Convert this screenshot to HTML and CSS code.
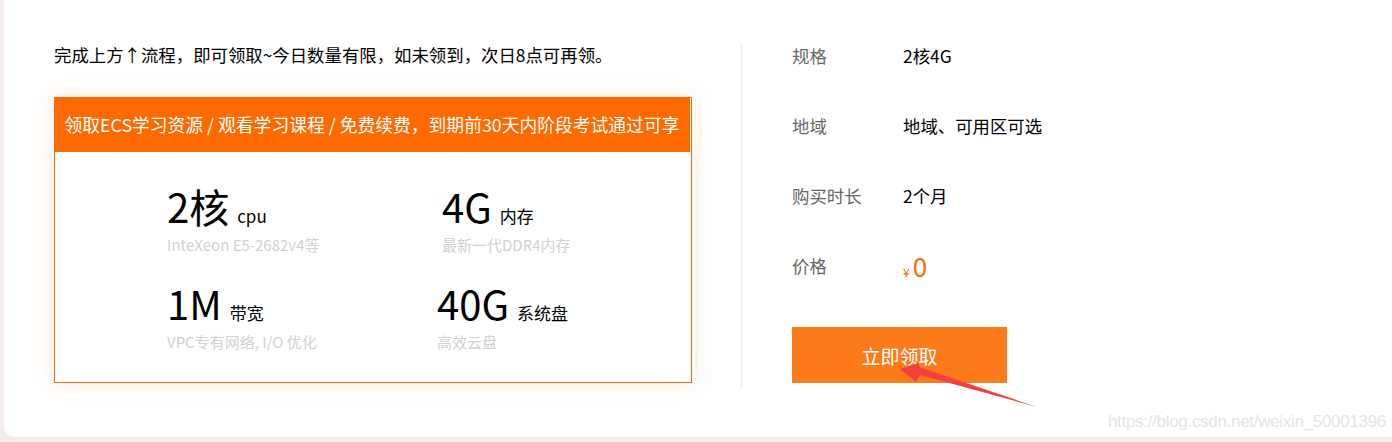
FILE: index.html
```html
<!DOCTYPE html>
<html lang="zh-CN">
<head>
<meta charset="utf-8">
<title>领取</title>
<link rel="stylesheet" href="styles.css">
</head>
<body>
<div class="card">
  <div class="main">
    <div class="left">
      <p class="notice">完成上方↑流程，即可领取~今日数量有限，如未领到，次日8点可再领。</p>
      <div class="box">
        <div class="box-head">领取ECS学习资源 / 观看学习课程 / 免费续费，到期前30天内阶段考试通过可享</div>
        <div class="box-body">
          <div class="spec">
            <div class="spec-main"><span class="big">2核</span><span class="unit">cpu</span></div>
            <div class="spec-sub">InteXeon E5-2682v4等</div>
          </div>
          <div class="spec">
            <div class="spec-main"><span class="big">4G</span><span class="unit">内存</span></div>
            <div class="spec-sub">最新一代DDR4内存</div>
          </div>
          <div class="spec">
            <div class="spec-main"><span class="big">1M</span><span class="unit">带宽</span></div>
            <div class="spec-sub">VPC专有网络, I/O 优化</div>
          </div>
          <div class="spec spec-shift">
            <div class="spec-main"><span class="big">40G</span><span class="unit">系统盘</span></div>
            <div class="spec-sub">高效云盘</div>
          </div>
        </div>
      </div>
    </div>
    <div class="right">
      <div class="row"><span class="label">规格</span><span class="value">2核4G</span></div>
      <div class="row"><span class="label">地域</span><span class="value">地域、可用区可选</span></div>
      <div class="row"><span class="label">购买时长</span><span class="value">2个月</span></div>
      <div class="row"><span class="label">价格</span><span class="value price"><span class="yen">¥</span><span class="amount">0</span></span></div>
      <button class="btn">立即领取</button>
    </div>
  </div>
  <div class="watermark">https://blog.csdn.net/weixin_50001396</div>
  <svg class="arrow" width="150" height="50" viewBox="0 0 150 50">
    <polygon points="0,14 19,8 19,12 137,52 20,20 16,27" fill="#f53f3f"/>
  </svg>
</div>
</body>
</html>
```
FILE: styles.css
```css
* { box-sizing: border-box; }
html, body { margin: 0; padding: 0; }
body {
  background: #f4ece9;
  font-family: "Noto Sans CJK SC", "Noto Sans", sans-serif;
  color: #000;
  width: 1392px;
  height: 442px;
  overflow: hidden;
}
.card {
  position: relative;
  margin-left: 4px;
  height: 437px;
  background: #fff;
  border-radius: 0 0 0 10px;
  padding-top: 43px;
}
.main {
  display: flex;
}
.left {
  width: 738px;
  padding: 1px 0 5px 50px;
  border-right: 1px solid #ececec;
}
.notice {
  margin: 0;
  font-size: 17.4px;
  line-height: 22px;
  white-space: nowrap;
}
.box {
  margin-top: 31px;
  width: 638px;
  height: 286px;
  border: 1px solid #ff6a00;
  box-shadow: 0 0 22px rgba(255, 120, 30, 0.16);
  background: #fff;
}
.box-head {
  margin: -1px 1px 0 -1px;
  height: 55px;
  background: #ff6a00;
  color: #fff;
  font-size: 17.8px;
  line-height: 55px;
  text-align: center;
  white-space: nowrap;
}
.box-body {
  display: grid;
  grid-template-columns: 275px 1fr;
  row-gap: 26px;
  padding: 32px 0 0 112px;
}
.spec-main {
  display: flex;
  align-items: baseline;
  white-space: nowrap;
}
.big {
  font-size: 40px;
  line-height: 44px;
}
.unit {
  font-size: 17px;
  line-height: 20px;
  margin-left: 8px;
}
.spec-shift { margin-left: -5px; }
.spec-sub {
  margin-top: 7px;
  font-size: 15px;
  line-height: 20px;
  color: #d0d0d0;
  white-space: nowrap;
}
.right {
  padding-left: 50px;
}
.row {
  display: flex;
  height: 26px;
  line-height: 26px;
  margin-bottom: 44px;
  font-size: 17.4px;
}
.label {
  width: 111px;
  color: #666;
}
.value { color: #000; }
.price { color: #ff6a00; }
.yen { font-size: 12px; margin-right: 3px; }
.amount { font-size: 26px; }
.btn {
  display: block;
  margin-top: 48px;
  width: 215px;
  height: 56px;
  border: 0;
  background: #fd7a1b;
  color: #fff;
  font-family: "Noto Sans CJK SC", sans-serif;
  font-size: 19px;
  padding: 0;
}
.watermark {
  position: absolute;
  right: 6px;
  bottom: 5px;
  font-family: "Liberation Sans", Arial, sans-serif;
  font-size: 17px;
  color: #e4e4e4;
  letter-spacing: -0.3px;
}
.arrow {
  position: absolute;
  left: 896px;
  top: 355px;
  overflow: visible;
}
```
